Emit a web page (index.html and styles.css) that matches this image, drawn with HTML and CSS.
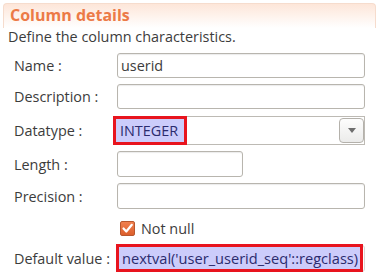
FILE: index.html
```html
<!DOCTYPE html>
<html lang="en">
<head>
    <meta charset="UTF-8">
    <title>Column details</title>
    <link rel="stylesheet" href="styles.css">
</head>
<body>
    <div class="panel">
        <div class="panel-head">
            <h2>Column details</h2>
        </div>
        <p class="intro">Define the column characteristics.</p>

        <div class="form">
            <div class="row r-name">
                <label>Name :</label>
                <div class="field wide"><span class="value">userid</span></div>
            </div>
            <div class="row r-desc">
                <label>Description :</label>
                <div class="field wide"></div>
            </div>
            <div class="row r-type">
                <label>Datatype :</label>
                <div class="field wide select">
                    <span class="mark mark-type">INTEGER</span>
                    <span class="drop-btn"><span class="arrow"></span></span>
                </div>
            </div>
            <div class="row r-len">
                <label>Length :</label>
                <div class="field short"></div>
            </div>
            <div class="row r-prec">
                <label>Precision :</label>
                <div class="field wide"></div>
            </div>
            <div class="row r-check">
                <label></label>
                <div class="check">
                    <span class="box">
                        <svg width="13" height="13" viewBox="0 0 13 13"><path d="M2.5 6.5 L5.3 9.5 L10.8 2.8" fill="none" stroke="#fff" stroke-width="2.2" stroke-linecap="round" stroke-linejoin="round"/></svg>
                    </span>
                    <span>Not null</span>
                </div>
            </div>
            <div class="row r-def">
                <label>Default value :</label>
                <div class="field wide plain">
                    <span class="mark mark-def">nextval('user_userid_seq'::regclass)</span>
                </div>
            </div>
        </div>
    </div>
</body>
</html>
```

FILE: styles.css
```css
body {
    margin: 0;
    padding: 0;
    background: #fff;
    font-family: "Open Sans", sans-serif;
    font-size: 14.4px;
    color: #3c3c3c;
}

.panel {
    width: 382px;
    height: 277px;
    overflow: hidden;
}

.panel-head {
    margin: 3px 6px 0 3px;
    height: 24px;
    border: 1px solid #f6dccd;
    border-bottom: none;
    border-radius: 4px 4px 0 0;
    background: linear-gradient(#fde6d9, #fff);
}

.panel-head h2 {
    margin: 0;
    padding: 1px 0 0 6px;
    font-size: 16px;
    font-weight: bold;
    color: #ec7a47;
    line-height: 20px;
}

.intro {
    margin: 0;
    padding: 0 0 0 8px;
    line-height: 18px;
}

.form {
    padding: 7px 0 0 14px;
}

.row {
    display: flex;
    align-items: center;
}

.row label {
    width: 103px;
    flex: none;
}

.r-name { height: 25px; margin-bottom: 6px; }
.r-desc { height: 25px; margin-bottom: 7px; }
.r-type { height: 29px; margin-bottom: 6px; }
.r-len  { height: 26px; margin-bottom: 6px; }
.r-prec { height: 26px; margin-bottom: 12px; }
.r-check { height: 15px; margin-bottom: 9px; }
.r-def  { height: 27px; }

.field {
    position: relative;
    height: 100%;
    box-sizing: border-box;
    border: 1px solid #b8b5ae;
    border-radius: 3px;
    box-shadow: inset 0 1px 1px rgba(0, 0, 0, 0.08);
    display: flex;
    align-items: center;
}

.wide { width: 248px; }
.short { width: 126px; }

.value {
    padding-left: 3px;
}

.select {
    border-radius: 0;
    box-shadow: none;
    border-color: #bdbab4;
}

.plain {
    box-shadow: none;
    border-color: #d8d6d2;
}

.drop-btn {
    position: absolute;
    right: 0;
    top: 1px;
    width: 25px;
    height: 25px;
    box-sizing: border-box;
    border: 1px solid #b4b1ab;
    border-radius: 4px;
    background: linear-gradient(#fdfdfd, #ebebea);
    display: flex;
    align-items: center;
    justify-content: center;
}

.arrow {
    width: 0;
    height: 0;
    border-left: 4px solid transparent;
    border-right: 4px solid transparent;
    border-top: 5px solid #6e6e6e;
}

/* red highlight boxes drawn over the fields */
.mark {
    position: absolute;
    box-sizing: border-box;
    border: 3px solid #e8141e;
    background: #ccccfb;
    color: #2b2b6e;
    display: flex;
    align-items: center;
    white-space: nowrap;
}

.mark-type {
    left: -5px;
    top: -1px;
    width: 74px;
    height: 29px;
    padding-left: 4px;
}

.mark-def {
    left: -2px;
    top: -2px;
    width: 247px;
    height: 28px;
    padding-left: 3px;
    font-size: 14.6px;
}

.check {
    display: flex;
    align-items: center;
    gap: 6px;
}

.box {
    margin-left: 3px;
    width: 15px;
    height: 15px;
    box-sizing: border-box;
    border: 1px solid #b8572e;
    border-radius: 2px;
    background: linear-gradient(#f0804f, #dc5f2c);
    display: flex;
    align-items: center;
    justify-content: center;
}
```
